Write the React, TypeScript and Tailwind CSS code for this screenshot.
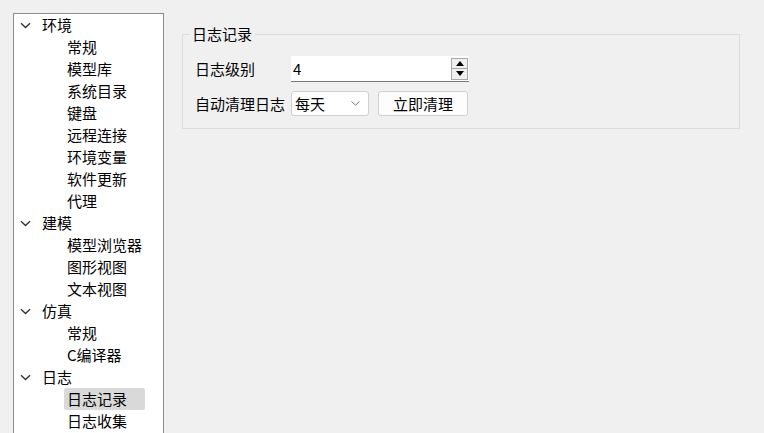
import React from "react";

const font = { fontFamily: '"Noto Sans CJK SC", "Noto Sans", sans-serif' };

type Node = { label: string; children: string[] };

const tree: Node[] = [
  { label: "环境", children: ["常规", "模型库", "系统目录", "键盘", "远程连接", "环境变量", "软件更新", "代理"] },
  { label: "建模", children: ["模型浏览器", "图形视图", "文本视图"] },
  { label: "仿真", children: ["常规", "C编译器"] },
  { label: "日志", children: ["日志记录", "日志收集"] },
];

function Chevron() {
  return (
    <svg width="11" height="7" viewBox="0 0 11 7" className="shrink-0">
      <path d="M1 1.2 L5.5 5.5 L10 1.2" fill="none" stroke="#333" strokeWidth="1.4" />
    </svg>
  );
}

function Tree() {
  return (
    <div className="ml-[13px] mt-[13px] h-[440px] w-[151px] shrink-0 border border-[#8c8c8c] bg-white text-[15px] text-black">
      {tree.map((n) => (
        <div key={n.label}>
          <div className="flex h-[22px] items-center pl-[6px]">
            <Chevron />
            <span className="ml-[11px] leading-[22px]">{n.label}</span>
          </div>
          {n.children.map((c) => {
            const sel = n.label === "日志" && c === "日志记录";
            return (
              <div key={c} className="flex h-[22px] items-center pl-[50px]">
                <span
                  className={
                    "h-[22px] w-[81px] rounded-[2px] px-[3px] leading-[22px] " + (sel ? "bg-[#d9d9d9]" : "")
                  }
                >
                  {c}
                </span>
              </div>
            );
          })}
        </div>
      ))}
    </div>
  );
}

function SpinBox() {
  return (
    <div className="flex h-[26px] w-[178px] items-center justify-between border-b border-[#7a7a7a] bg-white pl-[2px] pr-[1px]">
      <span className="leading-[20px]">4</span>
      <div className="flex flex-col">
        <div className="flex h-[11px] w-[17px] items-center justify-center border border-[#a8a8a8] bg-[#f0f0f0]">
          <svg width="8" height="5" viewBox="0 0 8 5">
            <path d="M0 5 L4 0 L8 5 Z" fill="#000" />
          </svg>
        </div>
        <div className="flex h-[11px] w-[17px] items-center justify-center border border-t-0 border-[#a8a8a8] bg-[#f0f0f0]">
          <svg width="8" height="5" viewBox="0 0 8 5">
            <path d="M0 0 L8 0 L4 5 Z" fill="#000" />
          </svg>
        </div>
      </div>
    </div>
  );
}

export default function App() {
  return (
    <div className="flex h-[433px] w-[764px] overflow-hidden bg-[#f0f0f0] text-black" style={font}>
      <Tree />
      <div className="ml-[18px] mt-[34px]">
        <div className="relative h-[95px] w-[558px] border border-[#dcdcdc] pl-[12px] pt-[21px] text-[15px]">
          <div className="absolute left-[6px] top-[-11px] bg-[#f0f0f0] px-[3px] leading-[20px]">日志记录</div>
          <div className="flex items-center">
            <span className="w-[96px] leading-[20px]">日志级别</span>
            <SpinBox />
          </div>
          <div className="mt-[9px] flex items-center">
            <span className="w-[96px] leading-[20px]">自动清理日志</span>
            <div className="flex h-[25px] w-[78px] items-center justify-between rounded-[3px] border border-[#d0d0d0] bg-white pl-[3px] pr-[8px]">
              <span className="leading-[20px]">每天</span>
              <svg width="9" height="5" viewBox="0 0 9 5">
                <path d="M0.5 0.5 L4.5 4.2 L8.5 0.5" fill="none" stroke="#777" strokeWidth="1" />
              </svg>
            </div>
            <div className="ml-[9px] flex h-[25px] w-[90px] items-center justify-center rounded-[3px] border border-[#d0d0d0] bg-[#fdfdfd] leading-[20px]">
              立即清理
            </div>
          </div>
        </div>
      </div>
    </div>
  );
}
